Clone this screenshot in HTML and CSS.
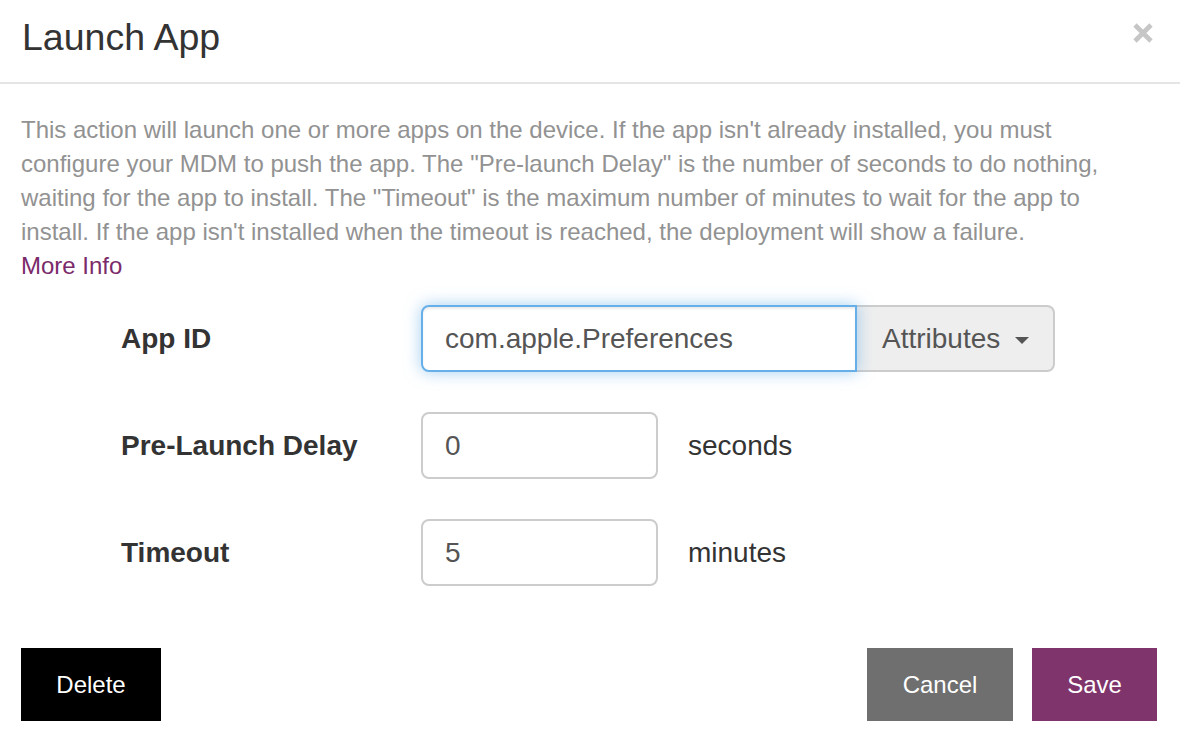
FILE: index.html
```html
<!DOCTYPE html>
<html lang="en">
<head>
<meta charset="utf-8">
<title>Launch App</title>
<link rel="stylesheet" href="styles.css">
</head>
<body>
<div class="modal">
  <div class="modal-header">
    <h4 class="modal-title">Launch App</h4>
    <button class="close" type="button" aria-label="Close">
      <svg width="22" height="22" viewBox="0 0 22 22"><path d="M3 3 L19 19 M19 3 L3 19" stroke="#c6c6c6" stroke-width="4.6" stroke-linecap="butt"/></svg>
    </button>
  </div>
  <div class="modal-body">
    <p class="help">This action will launch one or more apps on the device. If the app isn't already installed, you must<br>configure your MDM to push the app. The "Pre-launch Delay" is the number of seconds to do nothing,<br>waiting for the app to install. The "Timeout" is the maximum number of minutes to wait for the app to<br>install. If the app isn't installed when the timeout is reached, the deployment will show a failure.<br><a class="more" href="#">More Info</a></p>
    <form class="form">
      <div class="row">
        <label class="label">App ID</label>
        <div class="input-group">
          <input class="input focus" type="text" value="com.apple.Preferences">
          <button class="addon" type="button">Attributes <span class="caret"></span></button>
        </div>
      </div>
      <div class="row">
        <label class="label">Pre-Launch Delay</label>
        <div class="inline">
          <input class="input small" type="text" value="0">
          <span class="unit">seconds</span>
        </div>
      </div>
      <div class="row">
        <label class="label">Timeout</label>
        <div class="inline">
          <input class="input small" type="text" value="5">
          <span class="unit">minutes</span>
        </div>
      </div>
    </form>
  </div>
  <div class="modal-footer">
    <button class="btn btn-delete" type="button">Delete</button>
    <div class="right">
      <button class="btn btn-cancel" type="button">Cancel</button>
      <button class="btn btn-save" type="button">Save</button>
    </div>
  </div>
</div>
</body>
</html>
```
FILE: styles.css
```css
* { box-sizing: border-box; }
html, body {
  margin: 0;
  padding: 0;
  background: #fff;
}
body {
  font-family: "Liberation Sans", Arial, Helvetica, sans-serif;
  color: #333;
  width: 1180px;
  height: 748px;
  overflow: hidden;
}
.modal-header {
  height: 84px;
  padding: 12px 22px 0 22px;
  border-bottom: 2px solid #e5e5e5;
  display: flex;
  justify-content: space-between;
  align-items: flex-start;
}
.modal-title {
  margin: 0;
  font-size: 37.5px;
  line-height: 51px;
  font-weight: normal;
  color: #333;
}
.close {
  margin: 10px 4px 0 0;
  padding: 0;
  border: 0;
  background: none;
  width: 22px;
  height: 22px;
  display: flex;
}
.modal-body {
  padding: 29px 22px 0 21px;
}
.help {
  margin: 0;
  white-space: nowrap;
  font-size: 24px;
  line-height: 34px;
  color: #929292;
}
.more {
  font-size: 24px;
  color: #7b2a6a;
  text-decoration: none;
}
.form {
  margin-top: 22px;
  padding-left: 100px;
  display: flex;
  flex-direction: column;
  gap: 40px;
}
.row {
  display: flex;
  align-items: center;
  height: 67px;
}
.label {
  width: 300px;
  font-size: 28px;
  font-weight: bold;
  color: #333;
}
.input-group {
  display: flex;
  height: 67px;
}
.input {
  font-family: "Liberation Sans", Arial, Helvetica, sans-serif;
  font-size: 28px;
  color: #555;
  height: 67px;
  padding: 0 22px;
  border: 2px solid #ccc;
  border-radius: 8px;
  background: #fff;
  outline: none;
}
.input.focus {
  width: 436px;
  border-color: #66afe9;
  border-radius: 8px 0 0 8px;
  box-shadow: inset 0 2px 2px rgba(0,0,0,.075), 0 0 16px rgba(102,175,233,.6);
  position: relative;
  z-index: 1;
}
.addon {
  width: 199px;
  height: 67px;
  margin-left: -1px;
  font-family: "Liberation Sans", Arial, Helvetica, sans-serif;
  font-size: 28px;
  color: #555;
  background: #eee;
  border: 2px solid #ccc;
  border-left: 0;
  border-radius: 0 8px 8px 0;
  padding: 0 0 0 26px;
  display: flex;
  align-items: center;
  text-align: left;
}
.caret {
  display: inline-block;
  width: 0;
  height: 0;
  margin-left: 15px;
  margin-top: 3px;
  border-top: 7px solid #555;
  border-left: 7px solid transparent;
  border-right: 7px solid transparent;
}
.inline {
  display: flex;
  align-items: center;
  gap: 30px;
}
.input.small {
  width: 237px;
}
.unit {
  font-size: 28px;
  color: #333;
}
.modal-footer {
  margin-top: 62px;
  padding: 0 23px 0 21px;
  display: flex;
  justify-content: space-between;
}
.right {
  display: flex;
  gap: 19px;
}
.btn {
  height: 73px;
  padding: 0 35px;
  border: 0;
  border-radius: 0;
  font-family: "Liberation Sans", Arial, Helvetica, sans-serif;
  font-size: 24px;
  color: #fff;
}
.btn-delete { background: #000; width: 140px; }
.btn-cancel { background: #6f6f6f; width: 146px; }
.btn-save { background: #7f346b; width: 125px; }
```
